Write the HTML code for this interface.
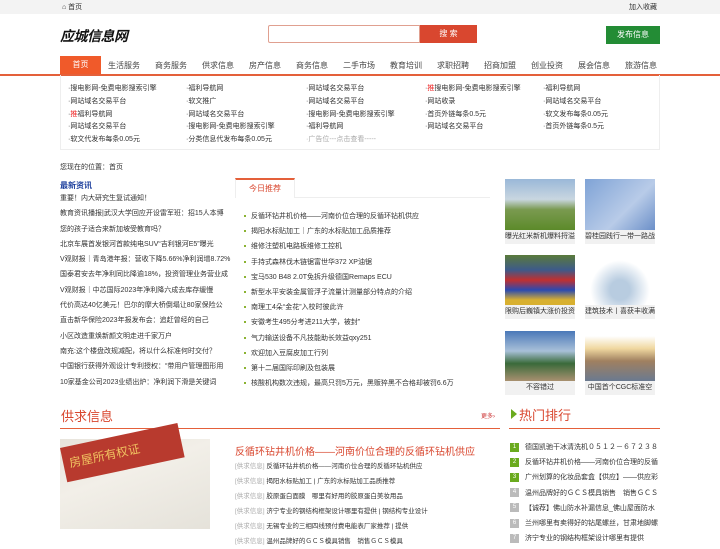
<!DOCTYPE html><html><head><meta charset="utf-8"><style>
*{margin:0;padding:0;box-sizing:border-box}
body{width:720px;height:540px;overflow:hidden;background:#fff;font-family:"Liberation Sans","Noto Sans CJK SC",sans-serif;font-size:7px;color:#333;position:relative}
.a{position:absolute;white-space:nowrap}
.top{position:absolute;left:0;top:0;width:720px;height:14px;background:#f3f3f3}
.nav span{position:absolute;top:60px;font-size:8px;color:#444}
.lk{position:absolute;font-size:7px;color:#333}
.g{color:#aaa}
.ll div{height:15.3px;font-size:7px;line-height:15px;color:#333;white-space:nowrap;overflow:hidden}
.rl div{height:15.2px;font-size:7px;line-height:15px;color:#333;white-space:nowrap;padding-left:8px;position:relative}
.rl div:before{content:"";position:absolute;left:1px;top:6px;width:2px;height:2px;background:#8bb332}
.im{position:absolute;width:70px}
.cap{position:absolute;width:70px;height:14px;background:#f1f1f1;font-size:7px;line-height:14px;text-align:center;overflow:hidden;white-space:nowrap;color:#333}
.gq div{height:15px;line-height:15px;font-size:6.5px;color:#333;white-space:nowrap}
.gq b{font-weight:normal;color:#aaa}
.hot div{height:15.2px;line-height:15px;font-size:7px;white-space:nowrap;overflow:hidden;width:150px}
.hot i{display:inline-block;width:9px;height:9px;font-style:normal;color:#fff;font-size:6px;text-align:center;line-height:9px;margin-right:6px;vertical-align:middle;background:#bbb}
.hot i.gr{background:#6aaa1e}
</style></head><body>
<div class="top"></div>
<div class="a" style="left:62px;top:2px;font-size:7px">⌂ 首页</div>
<div class="a" style="left:629px;top:2px;font-size:7px">加入收藏</div>
<div class="a" style="left:60px;top:26px;font-size:14px;font-weight:bold;font-style:italic;color:#111;letter-spacing:-.5px">应城信息网</div>
<div class="a" style="left:268px;top:25px;width:152px;height:18px;border:1px solid #e0a090;border-radius:2px 0 0 2px"></div>
<div class="a" style="left:420px;top:25px;width:57px;height:18px;background:#d9472f;color:#fff;font-size:8px;text-align:center;line-height:18px">搜 索</div>
<div class="a" style="left:606px;top:26px;width:54px;height:18px;background:#238c35;color:#fff;font-size:8px;text-align:center;line-height:18px">发布信息</div>
<div class="a" style="left:60px;top:56px;width:41px;height:19px;background:#f05a2a;color:#fff;font-size:8px;text-align:center;line-height:18px">首页</div>
<div class="a" style="left:0;top:74px;width:720px;height:1.5px;background:#e4603a"></div>
<div class="nav"><span style="left:108px">生活服务</span><span style="left:155px">商务服务</span><span style="left:202px">供求信息</span><span style="left:249px">房产信息</span><span style="left:296px">商务信息</span><span style="left:343px">二手市场</span><span style="left:390px">教育培训</span><span style="left:437px">求职招聘</span><span style="left:484px">招商加盟</span><span style="left:531px">创业投资</span><span style="left:578px">展会信息</span><span style="left:625px">旅游信息</span></div>
<div class="a" style="left:60px;top:75px;width:600px;height:75px;border:1px solid #eee;border-top:none"></div>
<div class="lk" style="left:68px;top:83px;line-height:12.8px">·搜电影网-免费电影搜索引擎<br>·网站域名交易平台<br>·<span style="color:#e22">推</span>福利导航网<br>·网站域名交易平台<br>·软文代发布每条0.05元</div>
<div class="lk" style="left:186px;top:83px;line-height:12.8px">·福利导航网<br>·软文推广<br>·网站域名交易平台<br>·搜电影网-免费电影搜索引擎<br>·分类信息代发布每条0.05元</div>
<div class="lk" style="left:306px;top:83px;line-height:12.8px">·网站域名交易平台<br>·网站域名交易平台<br>·搜电影网-免费电影搜索引擎<br>·福利导航网<br><span class="g">·广告位---点击查看-----</span></div>
<div class="lk" style="left:425px;top:83px;line-height:12.8px">·<span style="color:#e22">推</span>搜电影网-免费电影搜索引擎<br>·网站收录<br>·首页外链每条0.5元<br>·网站域名交易平台</div>
<div class="lk" style="left:543px;top:83px;line-height:12.8px">·福利导航网<br>·网站域名交易平台<br>·软文发布每条0.05元<br>·首页外链每条0.5元</div>
<div class="a" style="left:60px;top:162px;font-size:7px">您现在的位置：首页</div>
<div class="a" style="left:60px;top:180px;font-size:8px;font-weight:bold;color:#1a3d9c">最新资讯</div>
<div class="a ll" style="left:60px;top:191px;width:172px">
<div>重要！内大研究生复试通知！</div><div>教育资讯播报|武汉大学回应开设雷军班：招15人本博</div><div>您的孩子适合来新加坡受教育吗？</div><div>北京车展首发银河首款纯电SUV“吉利银河E5”曝光</div><div>V观财报｜青岛港年报：营收下降5.66%净利润增8.72%</div><div>国泰君安去年净利同比降逾18%，投资管理业务营业成</div><div>V观财报｜中芯国际2023年净利降六成去库存缓慢</div><div>代价高达40亿美元！巴尔的摩大桥倒塌让80家保险公</div><div>直击新华保险2023年报发布会：追赶曾经的自己</div><div>小区改造重焕新颜文明走进千家万户</div><div>南充:这个楼盘改规减配，将以什么标准何时交付？</div><div>中国银行获得外观设计专利授权：“带用户管理图形用</div><div>10家基金公司2023业绩出炉：净利润下滑是关键词</div></div>
<div class="a" style="left:235px;top:197px;width:255px;height:1px;background:#eee"></div>
<div class="a" style="left:235px;top:178px;width:60px;height:20px;border-top:2px solid #e4603a;background:#fff;color:#d9472f;font-size:8px;text-align:center;line-height:18px;border-left:1px solid #eee;border-right:1px solid #eee">今日推荐</div>
<div class="a rl" style="left:243px;top:209px">
<div>反循环钻井机价格——河南价位合理的反循环钻机供应</div><div>揭阳水标贴加工｜广东的水标贴加工品质推荐</div><div>维修注塑机电路板维修工控机</div><div>手持式森林伐木链锯富世华372 XP油锯</div><div>宝马530 B48 2.0T免拆升级德国Remaps ECU</div><div>新型水平安装金属管浮子流量计测量部分特点的介绍</div><div>南理工4朵“金花”入校时彼此许</div><div>安徽考生495分考进211大学，被封”</div><div>气力输送设备不凡技能助长效益qxy251</div><div>欢迎加入豆腐皮加工行列</div><div>第十二届国际印刷及包装展</div><div>核酸机构数次违规，最高只罚5万元，黑贩猝黑不合格却被罚6.6万</div></div>
<div class="im" style="left:505px;top:179px;height:51px;background:linear-gradient(#9ab8d8 0%,#c9d6e0 40%,#7a9a50 60%,#5c8a2a 100%)"></div>
<div class="cap" style="left:505px;top:230px">曝光红米新机爆料捋溢</div>
<div class="im" style="left:585px;top:179px;height:51px;background:linear-gradient(135deg,#7fa3d6,#b8cbe8 60%,#6b8fc8)"></div>
<div class="cap" style="left:585px;top:230px">碧桂园践行一带一路战</div>
<div class="im" style="left:505px;top:255px;height:50px;background:linear-gradient(#5a7a3a,#3d5a8a 30%,#c03030 50%,#2a4ab0 70%,#d8b030 90%)"></div>
<div class="cap" style="left:505px;top:305px">限购后巍镇大涨价投资</div>
<div class="im" style="left:585px;top:255px;height:50px;background:radial-gradient(circle at 50% 70%,#b8cce0 20%,#fff 60%)"></div>
<div class="cap" style="left:585px;top:305px">建筑技术丨喜获丰收满</div>
<div class="im" style="left:505px;top:331px;height:50px;background:linear-gradient(#4a78b8,#a8c0d8 40%,#3a6a3a 65%,#a89070 100%)"></div>
<div class="cap" style="left:505px;top:381px">不容错过</div>
<div class="im" style="left:585px;top:331px;height:50px;background:linear-gradient(#fff 10%,#f0d8a0 35%,#a08060 60%,#6a7a90 100%)"></div>
<div class="cap" style="left:585px;top:381px">中国首个CGC标准空</div>
<div class="a" style="left:61px;top:406px;font-size:13px;color:#d9472f">供求信息</div>
<div class="a" style="left:481px;top:411px;font-size:6px;color:#c33">更多›</div>
<div class="a" style="left:60px;top:428px;width:440px;height:1px;background:#e4603a"></div>
<div class="a" style="left:511px;top:409px;width:0;height:0;border-left:6px solid #6aaa1e;border-top:5px solid transparent;border-bottom:5px solid transparent"></div>
<div class="a" style="left:519px;top:405px;font-size:13px;color:#d9472f">热门排行</div>
<div class="a" style="left:509px;top:428px;width:151px;height:1px;background:#e4603a"></div>
<div class="a" style="left:60px;top:439px;width:150px;height:90px;background:linear-gradient(160deg,#e8e4dc 0%,#f2efe8 40%,#e5e2da 100%)"></div>
<div class="a" style="left:60px;top:448px;width:120px;height:35px;background:#b83a2e;transform:rotate(-12deg);transform-origin:left top;color:#f0c060;font-size:12px;line-height:35px;padding-left:6px">房屋所有权证</div>
<div class="a" style="left:235px;top:443px;font-size:10px;color:#d9472f">反循环钻井机价格——河南价位合理的反循环钻机供应</div>
<div class="a gq" style="left:235px;top:459px">
<div><b>[供求信息]</b> 反循环钻井机价格——河南价位合理的反循环钻机供应</div><div><b>[供求信息]</b> 揭阳水标贴加工 | 广东的水标贴加工品质推荐</div><div><b>[供求信息]</b> 胶原蛋白面膜　哪里有好用的胶原蛋白美妆用品</div><div><b>[供求信息]</b> 济宁专业的钢结构框架设计哪里有提供 | 钢结构专业设计</div><div><b>[供求信息]</b> 无锡专业的三相四线预付费电能表厂家推荐 | 提供</div><div><b>[供求信息]</b> 温州品牌好的ＧＣＳ模具销售　销售ＧＣＳ模具</div></div>
<div class="a hot" style="left:510px;top:440px">
<div><i class="gr">1</i>德国凯驰干冰清洗机０５１２－６７２３８</div><div><i class="gr">2</i>反循环钻井机价格——河南价位合理的反循</div><div><i class="gr">3</i>广州划算的化妆品套盒【供应】——供应彩</div><div><i>4</i>温州品牌好的ＧＣＳ模具销售　销售ＧＣＳ</div><div><i>5</i>【诚荐】佛山防水补漏信息_佛山屋面防水</div><div><i>6</i>兰州哪里有卖得好的钻尾螺丝，甘肃地脚螺</div><div><i>7</i>济宁专业的钢结构框架设计哪里有提供</div></div>
</body></html>
